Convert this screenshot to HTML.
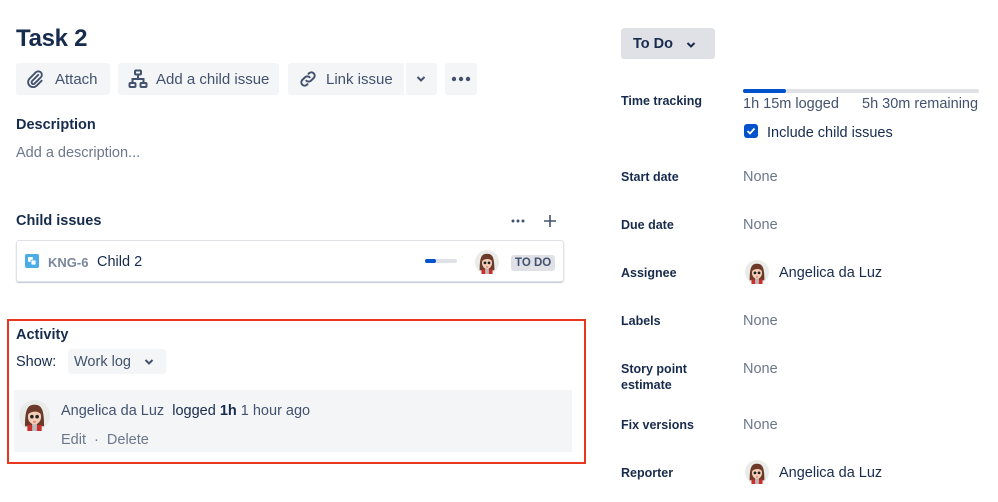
<!DOCTYPE html>
<html><head><meta charset="utf-8">
<style>
*{margin:0;padding:0;box-sizing:border-box}
body{width:998px;height:502px;background:#fff;font-family:"Liberation Sans",sans-serif;color:#172b4d;position:relative;overflow:hidden}
.a{position:absolute;white-space:nowrap}
.btn{position:absolute;top:63px;height:32px;background:#f4f5f7;border-radius:3px;font-size:15px;color:#42526e;display:flex;align-items:center}
.lbl{position:absolute;left:621px;font-size:12.5px;font-weight:bold;color:#172b4d;line-height:16px}
.val{position:absolute;left:743px;font-size:14.5px;color:#6b778c}
.h{font-size:14.5px;font-weight:bold;color:#172b4d}
</style></head><body>
<svg width="0" height="0" style="position:absolute"><defs>
<symbol id="av" viewBox="0 0 26 26">
<circle cx="13" cy="13" r="13" fill="#e9ece8"/>
<path d="M5 22 C5 8 7 4 13 4 C19 4 21 8 21 22 Z" fill="#6b3a2a"/>
<path d="M7 26 L7 21 L19 21 L19 26 Z" fill="#c9302c"/>
<rect x="11" y="20" width="4" height="6" fill="#bbb"/>
<ellipse cx="13" cy="14" rx="5.5" ry="6.5" fill="#f3cdb5"/>
<path d="M7.5 12 C8 7 11 6 13 6 C16 6 18 8 18.5 12 C16 9 11 9 7.5 12Z" fill="#6b3a2a"/>
<circle cx="10.8" cy="14" r="1.5" fill="#222"/><circle cx="15.2" cy="14" r="1.5" fill="#222"/>
<path d="M12 18 Q13 19 14 18" stroke="#c55" stroke-width=".8" fill="none"/>
</symbol></defs></svg>

<div class="a" style="left:16px;top:25px;font-size:24px;font-weight:bold;color:#172b4d;letter-spacing:-0.3px">Task 2</div>

<div class="btn" style="left:16px;width:94px"><svg style="margin-left:9px" width="20" height="20" viewBox="0 0 24 24" fill="none" stroke="#42526e" stroke-width="2.2" stroke-linecap="round"><path d="M16 7 L8.5 14.5 a2 2 0 0 0 3 3 L19 10 a4 4 0 0 0 -6 -6 L5.5 11.5 a6 6 0 0 0 8.5 8.5 L20 14"/></svg><span style="margin-left:10px">Attach</span></div>
<div class="btn" style="left:118px;width:161px"><svg style="margin-left:10px" width="20" height="20" viewBox="0 0 20 20" fill="none" stroke="#42526e" stroke-width="2"><rect x="7" y="1.5" width="6" height="4" rx="1"/><path d="M10 5.5 V10 M4.5 14 V10 H15.5 V14"/><rect x="1.5" y="14" width="6" height="4" rx="1"/><rect x="12.5" y="14" width="6" height="4" rx="1"/></svg><span style="margin-left:8px">Add a child issue</span></div>
<div class="btn" style="left:288px;width:149px"><svg style="margin-left:10px" width="20" height="20" viewBox="0 0 24 24" fill="none" stroke="#42526e" stroke-width="2.4" stroke-linecap="round"><path d="M10 14 a4 4 0 0 0 5.6 0 l3.6 -3.6 a4 4 0 0 0 -5.6 -5.6 l-1 1"/><path d="M14 10 a4 4 0 0 0 -5.6 0 l-3.6 3.6 a4 4 0 0 0 5.6 5.6 l1 -1"/></svg><span style="margin-left:8px">Link issue</span>
<div style="position:absolute;left:116px;top:0;width:2px;height:32px;background:#fff"></div>
<svg style="position:absolute;left:128px;top:12px" width="10" height="8" viewBox="0 0 10 8"><path d="M1.5 2 L5 5.5 L8.5 2" stroke="#42526e" stroke-width="2" fill="none"/></svg></div>
<div class="btn" style="left:445px;width:32px;justify-content:center"><svg width="20" height="6"><circle cx="3" cy="3" r="2.2" fill="#42526e"/><circle cx="10" cy="3" r="2.2" fill="#42526e"/><circle cx="17" cy="3" r="2.2" fill="#42526e"/></svg></div>

<div class="a h" style="left:16px;top:117px">Description</div>
<div class="a" style="left:16px;top:145px;font-size:14.5px;color:#6b778c">Add a description...</div>

<div class="a h" style="left:16px;top:213px">Child issues</div>
<svg class="a" style="left:511px;top:219px" width="14" height="4"><circle cx="2" cy="2" r="1.5" fill="#42526e"/><circle cx="7" cy="2" r="1.5" fill="#42526e"/><circle cx="12" cy="2" r="1.5" fill="#42526e"/></svg>
<svg class="a" style="left:543px;top:214px" width="14" height="14"><path d="M7 1 V13 M1 7 H13" stroke="#42526e" stroke-width="1.6"/></svg>

<div class="a" style="left:16px;top:240px;width:548px;height:42px;border:1px solid #dfe1e6;border-radius:3px;box-shadow:0 1px 1px rgba(9,30,66,.25)"></div>
<svg class="a" style="left:25px;top:254px" width="14" height="14" viewBox="0 0 14 14"><rect width="14" height="14" rx="2" fill="#4bade8"/><rect x="3" y="3" width="5" height="5" rx="1" fill="#fff"/><rect x="6" y="6" width="5" height="5" rx="1" fill="#fff" stroke="#4bade8" stroke-width=".8"/></svg>
<div class="a" style="left:48px;top:255px;font-size:13px;font-weight:bold;color:#7a869a">KNG-6</div>
<div class="a" style="left:97px;top:254px;font-size:14.5px;color:#172b4d">Child 2</div>
<div class="a" style="left:425px;top:259px;width:32px;height:4px;background:#dfe1e6;border-radius:2px"><div style="width:11px;height:4px;background:#0052cc;border-radius:2px"></div></div>
<svg class="a" style="left:475px;top:250px" width="24" height="24"><use href="#av"/></svg>
<div class="a" style="left:511px;top:255px;height:16px;padding:0 4px;background:#dfe1e6;border-radius:3px;font-size:11.5px;font-weight:bold;color:#42526e;line-height:16px">TO DO</div>

<div class="a" style="left:7px;top:319px;width:579px;height:145px;border:2px solid #e8361f"></div>
<div class="a h" style="left:16px;top:327px">Activity</div>
<div class="a" style="left:16px;top:354px;font-size:14.5px;color:#172b4d">Show:</div>
<div class="a" style="left:68px;top:349px;width:98px;height:25px;background:#f4f5f7;border-radius:3px;font-size:14.5px;color:#42526e;line-height:26px;padding-left:6px">Work log<svg style="position:absolute;left:76px;top:9px" width="10" height="8"><path d="M1.5 2 L5 5.5 L8.5 2" stroke="#42526e" stroke-width="2" fill="none"/></svg></div>
<div class="a" style="left:14px;top:390px;width:558px;height:62px;background:#f4f5f7"></div>
<svg class="a" style="left:19px;top:400px" width="31" height="31"><use href="#av"/></svg>
<div class="a" style="left:61px;top:403px;font-size:14.5px;color:#42526e">Angelica da Luz <span style="color:#172b4d">&nbsp;logged <b>1h</b></span> 1 hour ago</div>
<div class="a" style="left:61px;top:432px;font-size:14.5px;color:#6b778c">Edit &nbsp;·&nbsp; Delete</div>

<div class="a" style="left:621px;top:28px;width:94px;height:31px;background:#dfe1e6;border-radius:3px;font-size:14.5px;font-weight:bold;color:#172b4d;line-height:33px;padding-left:12px">To Do<svg style="position:absolute;left:65px;top:13px" width="10" height="8"><path d="M1.5 2 L5 5.5 L8.5 2" stroke="#172b4d" stroke-width="2" fill="none"/></svg></div>

<div class="lbl" style="top:93px">Time tracking</div>
<div class="a" style="left:743px;top:89px;width:236px;height:4px;background:#dfe1e6;border-radius:2px"><div style="width:43px;height:4px;background:#0052cc;border-radius:2px"></div></div>
<div class="a" style="left:743px;top:96px;font-size:14.5px;color:#42526e">1h 15m logged</div>
<div class="a" style="left:862px;top:96px;font-size:14.5px;color:#42526e">5h 30m remaining</div>
<svg class="a" style="left:744px;top:124px" width="14" height="14"><rect width="14" height="14" rx="3" fill="#0052cc"/><path d="M3.5 7 L6 9.5 L10.5 4.5" stroke="#fff" stroke-width="1.8" fill="none"/></svg>
<div class="a" style="left:767px;top:125px;font-size:14.5px;color:#172b4d">Include child issues</div>

<div class="lbl" style="top:169px">Start date</div><div class="val" style="top:169px">None</div>
<div class="lbl" style="top:217px">Due date</div><div class="val" style="top:217px">None</div>
<div class="lbl" style="top:265px">Assignee</div>
<svg class="a" style="left:745px;top:260px" width="24" height="24"><use href="#av"/></svg>
<div class="a" style="left:779px;top:265px;font-size:14.5px;color:#172b4d">Angelica da Luz</div>
<div class="lbl" style="top:313px">Labels</div><div class="val" style="top:313px">None</div>
<div class="lbl" style="top:361px">Story point<br>estimate</div><div class="val" style="top:361px">None</div>
<div class="lbl" style="top:417px">Fix versions</div><div class="val" style="top:417px">None</div>
<div class="lbl" style="top:465px">Reporter</div>
<svg class="a" style="left:745px;top:460px" width="24" height="24"><use href="#av"/></svg>
<div class="a" style="left:779px;top:465px;font-size:14.5px;color:#172b4d">Angelica da Luz</div>
</body></html>
